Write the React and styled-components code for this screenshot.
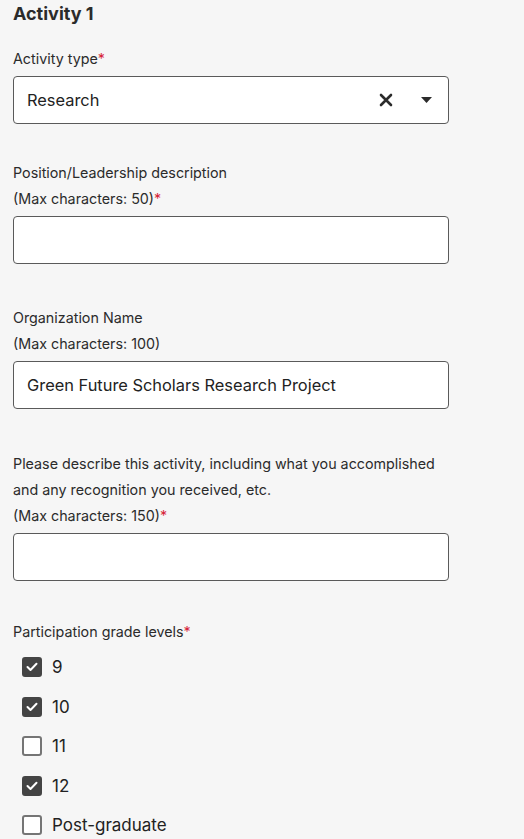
import React from 'react';
import styled, { createGlobalStyle } from 'styled-components';

const Global = createGlobalStyle`
  html, body {
    margin: 0;
    background: #f6f6f6;
  }
  body {
    font-family: Inter, "Open Sans", sans-serif;
    color: #222;
  }
`;

const Page = styled.div`
  width: 524px;
  min-height: 839px;
  padding: 3px 0 0 13px;
  box-sizing: border-box;
`;

const Heading = styled.h2`
  margin: 0 0 21px;
  font-size: 18px;
  font-weight: 700;
  line-height: 22px;
  color: #2b2b2b;
`;

const Field = styled.div`
  display: flex;
  flex-direction: column;
  margin-bottom: ${p => p.gap || 40}px;
`;

const Label = styled.div`
  font-size: 14.3px;
  line-height: 26px;
  color: #2b2b2b;
`;

const Star = styled.span`
  color: #d6243a;
`;

const Box = styled.div`
  margin-top: 4px;
  width: 436px;
  height: 48px;
  box-sizing: border-box;
  border: 1px solid #5a5a5a;
  border-radius: 4px;
  background: #fff;
  display: flex;
  align-items: center;
  padding: 0 16px 0 13px;
  font-size: 16.4px;
  color: #222;
`;

const Value = styled.span`
  flex: 1;
`;

const Icons = styled.div`
  display: flex;
  align-items: center;
  gap: 28px;
`;

const Grades = styled.div`
  display: flex;
  flex-direction: column;
  gap: 19.5px;
  padding: 12px 0 0 9px;
`;

const Option = styled.label`
  display: flex;
  align-items: center;
  gap: 10px;
  font-size: 17px;
  line-height: 20px;
  color: #222;
`;

const Check = styled.span`
  width: 20px;
  height: 20px;
  box-sizing: border-box;
  border-radius: 3px;
  border: 2px solid ${p => (p.on ? '#444' : '#757575')};
  background: ${p => (p.on ? '#444' : '#fff')};
  display: flex;
  align-items: center;
  justify-content: center;
`;

const Req = () => <Star>*</Star>;

const grades = [
  { label: '9', on: true },
  { label: '10', on: true },
  { label: '11', on: false },
  { label: '12', on: true },
  { label: 'Post-graduate', on: false }
];

export default function App() {
  return (
    <Page>
      <Global />
      <Heading>Activity 1</Heading>

      <Field gap={36}>
        <Label>Activity type<Req /></Label>
        <Box>
          <Value>Research</Value>
          <Icons>
            <svg width="14" height="14" viewBox="0 0 14 14">
              <path d="M2 2 L12 12 M12 2 L2 12" stroke="#2b2b2b" strokeWidth="2.6" strokeLinecap="round" />
            </svg>
            <svg width="11" height="6" viewBox="0 0 11 6">
              <path d="M0 0 H11 L5.5 6 Z" fill="#2b2b2b" />
            </svg>
          </Icons>
        </Box>
      </Field>

      <Field gap={41}>
        <Label>Position/Leadership description</Label>
        <Label>(Max characters: 50)<Req /></Label>
        <Box />
      </Field>

      <Field gap={42}>
        <Label>Organization Name</Label>
        <Label>(Max characters: 100)</Label>
        <Box>
          <Value>Green Future Scholars Research Project</Value>
        </Box>
      </Field>

      <Field gap={38}>
        <Label>Please describe this activity, including what you accomplished</Label>
        <Label>and any recognition you received, etc.</Label>
        <Label>(Max characters: 150)<Req /></Label>
        <Box />
      </Field>

      <Field>
        <Label>Participation grade levels<Req /></Label>
        <Grades>
          {grades.map(g => (
            <Option key={g.label}>
              <Check on={g.on}>
                {g.on && (
                  <svg width="12" height="10" viewBox="0 0 12 10">
                    <path d="M1.5 5 L4.5 8 L10.5 1.8" fill="none" stroke="#fff" strokeWidth="2" strokeLinecap="round" strokeLinejoin="round" />
                  </svg>
                )}
              </Check>
              {g.label}
            </Option>
          ))}
        </Grades>
      </Field>
    </Page>
  );
}
